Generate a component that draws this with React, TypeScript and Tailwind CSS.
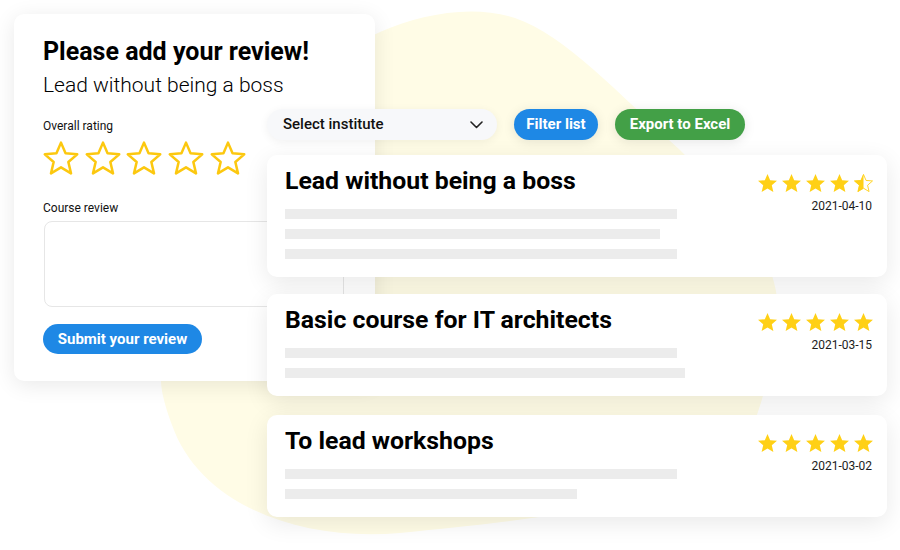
import React from "react";

const STAR = "M12 2l2.81 6.63L22 9.24l-5.46 4.73L18.18 21 12 17.27 5.82 21l1.64-7.03L2 9.24l7.19-.61z";

function OutlineStar() {
  return (
    <svg width="36" height="34" viewBox="1 1 22 21" className="shrink-0">
      <path d={STAR} fill="none" stroke="#fcc80f" strokeWidth="1.55" strokeLinejoin="round" />
    </svg>
  );
}

function FilledStar({ half = false, id }: { half?: boolean; id?: string }) {
  if (half) {
    return (
      <svg width="19" height="18" viewBox="2 2 20 19" className="shrink-0">
        <defs>
          <clipPath id={id}>
            <rect x="0" y="0" width="12" height="24" />
          </clipPath>
        </defs>
        <path d={STAR} fill="#ffd016" clipPath={`url(#${id})`} />
        <path d={STAR} fill="none" stroke="#ffd016" strokeWidth="1" strokeLinejoin="round" transform="translate(12 11.5) scale(0.95) translate(-12 -11.5)" />
      </svg>
    );
  }
  return (
    <svg width="19" height="18" viewBox="2 2 20 19" className="shrink-0">
      <path d={STAR} fill="#ffd016" />
    </svg>
  );
}

function Bar({ w }: { w: number }) {
  return <div className="h-[10px] bg-[#ececec]" style={{ width: w }} />;
}

function CourseCard({
  title,
  bars,
  date,
  half,
  id,
  className,
}: {
  title: string;
  bars: number[];
  date: string;
  half?: boolean;
  id: string;
  className?: string;
}) {
  return (
    <div
      className={
        "flex bg-white rounded-[10px] pl-[18px] pr-[14px] pt-[12px] pb-[18px] shadow-[0_6px_24px_rgba(0,0,0,0.09)] " +
        (className || "")
      }
    >
      <div className="flex-1 flex flex-col">
        <div className="text-[24.8px] leading-[28px] font-bold text-black">{title}</div>
        <div className="mt-[14px] flex flex-col gap-[10px]">
          {bars.map((b, i) => (
            <Bar key={i} w={b} />
          ))}
        </div>
      </div>
      <div className="flex flex-col items-end pt-[7px]">
        <div className="flex gap-[5px]">
          <FilledStar />
          <FilledStar />
          <FilledStar />
          <FilledStar />
          <FilledStar half={half} id={id} />
        </div>
        <div className="mt-[6px] text-[12px] leading-4 text-[#1c1c1c] pr-[1px]">{date}</div>
      </div>
    </div>
  );
}

export default function App() {
  return (
    <div
      className="relative w-[900px] h-[550px] bg-white overflow-hidden"
      style={{ fontFamily: "Roboto, 'Liberation Sans', sans-serif" }}
    >
      <svg className="absolute inset-0" width="900" height="550" viewBox="0 0 900 550">
        <path
          d="M380 32 C420 15 470 4 515 18 C565 35 620 95 680 150 C740 210 788 268 776 330 C770 372 764 400 748 438 C716 502 530 520 400 533 C300 542 200 505 172 425 C160 392 160 380 162 370 C168 250 260 85 380 32 Z"
          fill="#fffce6"
        />
      </svg>

      {/* Review form card */}
      <div className="absolute left-[14px] top-[14px] w-[361px] h-[367px] bg-white rounded-[10px] shadow-[0_4px_22px_rgba(0,0,0,0.09)] pl-[29px] pt-[23px] flex flex-col">
        <div className="text-[25px] leading-[30px] font-bold text-black">Please add your review!</div>
        <div className="mt-[5px] text-[21px] leading-[26px] font-light text-black">Lead without being a boss</div>
        <div className="mt-[20px] text-[12px] leading-4 text-[#111]">Overall rating</div>
        <div className="mt-[7px] flex gap-[5.7px]">
          <OutlineStar />
          <OutlineStar />
          <OutlineStar />
          <OutlineStar />
          <OutlineStar />
        </div>
        <div className="mt-[25px] text-[12px] leading-4 text-[#111]">Course review</div>
        <div className="mt-[5px] ml-px w-[300px] h-[86px] rounded-[8px] border border-[#e6e6e6] bg-white" />
        <button className="mt-[17px] self-start h-[30px] w-[159px] rounded-full bg-[#1e88e5] text-white text-[15px] font-bold leading-none">
          Submit your review
        </button>
      </div>

      {/* Course list panel */}
      <div className="absolute left-[267px] top-[108px] w-[620px] flex flex-col">
        <div className="flex items-center h-[32px]">
          <div className="w-[230px] h-[31px] mt-px rounded-full bg-[#f7f8fa] shadow-[0_2px_10px_rgba(0,0,0,0.06)] flex items-center justify-between pl-[16px] pr-[14px]">
            <span className="text-[15px] font-medium text-[#111]">Select institute</span>
            <svg width="13" height="8" viewBox="0 0 13 8">
              <path d="M1 1l5.5 5.5L12 1" fill="none" stroke="#222" strokeWidth="1.6" strokeLinecap="round" strokeLinejoin="round" />
            </svg>
          </div>
          <button className="ml-[17px] w-[84px] h-[31px] rounded-full bg-[#1e88e5] text-white text-[15px] font-bold shadow-[0_2px_12px_rgba(0,0,0,0.1)]">
            Filter list
          </button>
          <button className="ml-[17px] w-[130px] h-[31px] rounded-full bg-[#43a047] text-white text-[15px] font-bold shadow-[0_2px_12px_rgba(0,0,0,0.1)]">
            Export to Excel
          </button>
        </div>
        <CourseCard
          className="mt-[15px]"
          title="Lead without being a boss"
          bars={[392, 375, 392]}
          date="2021-04-10"
          half
          id="half1"
        />
        <CourseCard
          className="mt-[17px]"
          title="Basic course for IT architects"
          bars={[392, 400]}
          date="2021-03-15"
          id="h2"
        />
        <CourseCard
          className="mt-[19px]"
          title="To lead workshops"
          bars={[392, 292]}
          date="2021-03-02"
          id="h3"
        />
      </div>
    </div>
  );
}
